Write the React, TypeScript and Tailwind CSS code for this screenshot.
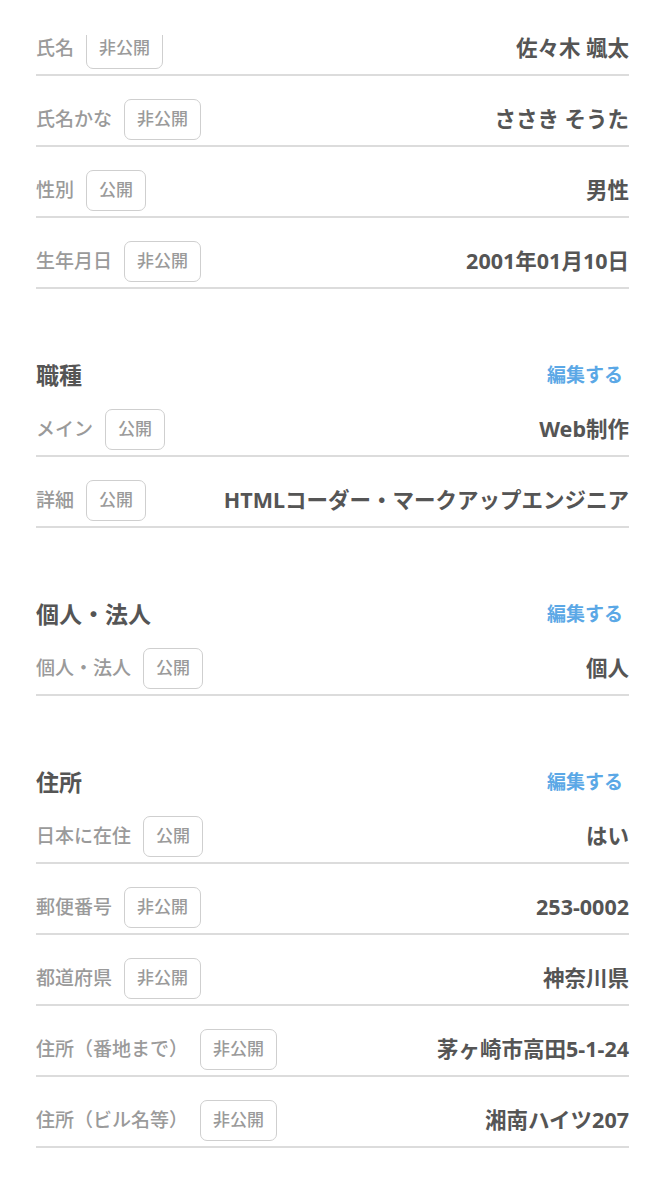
import React from 'react';

type Field = { label: string; isPublic: boolean; value: string };

const basic: Field[] = [
  { label: '氏名', isPublic: false, value: '佐々木 颯太' },
  { label: '氏名かな', isPublic: false, value: 'ささき そうた' },
  { label: '性別', isPublic: true, value: '男性' },
  { label: '生年月日', isPublic: false, value: '2001年01月10日' },
];

const sections: { title: string; fields: Field[] }[] = [
  {
    title: '職種',
    fields: [
      { label: 'メイン', isPublic: true, value: 'Web制作' },
      { label: '詳細', isPublic: true, value: 'HTMLコーダー・マークアップエンジニア' },
    ],
  },
  {
    title: '個人・法人',
    fields: [{ label: '個人・法人', isPublic: true, value: '個人' }],
  },
  {
    title: '住所',
    fields: [
      { label: '日本に在住', isPublic: true, value: 'はい' },
      { label: '郵便番号', isPublic: false, value: '253-0002' },
      { label: '都道府県', isPublic: false, value: '神奈川県' },
      { label: '住所（番地まで）', isPublic: false, value: '茅ヶ崎市高田5-1-24' },
      { label: '住所（ビル名等）', isPublic: false, value: '湘南ハイツ207' },
    ],
  },
];

function Row({ field }: { field: Field }) {
  return (
    <div className="flex items-center justify-between h-[71px] pt-[17px] border-b-2 border-[#dcdcdc]">
      <div className="flex items-center gap-[12px] shrink-0">
        <span className="text-[19px] text-[#9a9a9a] font-medium">{field.label}</span>
        <span className="h-[41px] px-[12px] flex items-center rounded-[7px] border border-[#cfcfcf] text-[17px] text-[#9a9a9a] font-medium">
          {field.isPublic ? '公開' : '非公開'}
        </span>
      </div>
      <span className="text-[21.5px] font-bold text-[#555555] whitespace-nowrap">{field.value}</span>
    </div>
  );
}

export default function App() {
  return (
    <div
      className="relative w-[665px] h-[1182px] overflow-hidden bg-white"
      style={{ fontFamily: '"Noto Sans", "Noto Sans CJK JP", sans-serif' }}
    >
      {/* fixed header covering the scrolled content */}
      <div className="absolute top-0 left-0 right-0 h-[35px] bg-white z-10" />

      <div className="px-[36px] pt-[5px]">
        {basic.map(f => (
          <Row key={f.label} field={f} />
        ))}

        {sections.map(s => (
          <div key={s.title} className="mt-[75px]">
            <div className="flex items-center justify-between h-[22px]">
              <h3 className="text-[23px] font-bold text-[#555555]">{s.title}</h3>
              <a className="mr-[6px] text-[19px] font-bold text-[#5ba8e6]">編集する</a>
            </div>
            {s.fields.map(f => (
              <Row key={f.label} field={f} />
            ))}
          </div>
        ))}
      </div>
    </div>
  );
}
